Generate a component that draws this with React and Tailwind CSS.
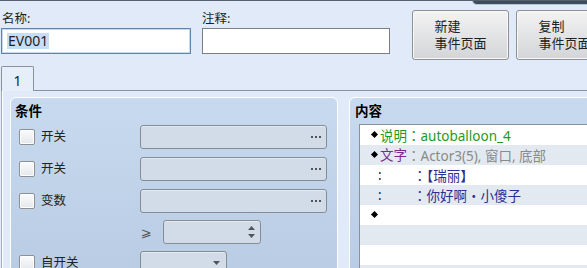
import React from "react";

const font = "font-['Noto_Sans','Noto_Sans_CJK_SC',sans-serif]";
const colon = "font-['Noto_Sans_CJK_TC',sans-serif]";

function Check() {
  return (
    <span className="block w-[16px] h-[16px] shrink-0 rounded-[2px] border border-[#8e9094] bg-linear-to-b from-[#fbfbfb] to-[#e4e8ec] shadow-[inset_0_0_0_1px_#fff]" />
  );
}

function Dots() {
  return (
    <span className="flex gap-[2px]">
      <span className="w-[2px] h-[2px] bg-[#4f5459]" />
      <span className="w-[2px] h-[2px] bg-[#4f5459]" />
      <span className="w-[2px] h-[2px] bg-[#4f5459]" />
    </span>
  );
}

function Field({ className = "", children }) {
  return (
    <div
      className={`h-[24px] shrink-0 rounded-[3px] border border-[#868c94] bg-[#d1dce8] shadow-[inset_0_1px_0_#e3eaf2] flex items-center justify-end ${className}`}
    >
      {children}
    </div>
  );
}

function CondRow({ label, className = "" }) {
  return (
    <div className={`flex items-center h-[24px] ${className}`}>
      <div className="w-[129px] shrink-0 flex items-center pl-[8px]">
        <Check />
        <span className="ml-[6px] text-[12.5px] text-[#222]">{label}</span>
      </div>
      <Field className="w-[187px] pr-[5px]">
        <Dots />
      </Field>
    </div>
  );
}

function Diamond() {
  return <span className="inline-block w-[5px] h-[5px] bg-black rotate-45 mr-[3px] mb-[2px]" />;
}

export default function App() {
  return (
    <div
      className={`relative w-[587px] h-[268px] overflow-hidden bg-[#e0eaf8] border-t border-[#56616e] text-[#1e1e1e] ${font}`}
    >
      {/* window title bar edge, top right */}
      <div className="absolute top-[-1px] left-[472px] w-[140px] h-[5px] bg-[#3c4b5e] rounded-bl-[7px] border-l border-b border-[#b8c5d3]" />

      {/* name / note / buttons */}
      <div className="flex items-start h-[65px] pt-[8px]">
        <div className="ml-[1px] w-[190px] shrink-0">
          <div className="h-[19px] leading-[19px] text-[12.5px] pl-[1px]">名称:</div>
          <div className="h-[26px] border border-[#5f84ad] bg-white shadow-[inset_0_0_0_1px_#c9d9ea] flex items-center pl-[5px]">
            <span className="bg-[#c5ddf5] text-[14px] leading-[16px] px-[1px]">EV001</span>
          </div>
        </div>
        <div className="ml-[11px] w-[188px] shrink-0">
          <div className="h-[19px] leading-[19px] text-[12.5px]">注释:</div>
          <div className="h-[26px] border border-[#7b7f85] bg-white" />
        </div>
        <button className="ml-[22px] mt-[1px] w-[97px] h-[50px] shrink-0 rounded-[3px] border border-[#8d9094] bg-linear-to-b from-[#f3f3f3] to-[#d3d5d8] shadow-[inset_0_0_0_1px_#f8f8f8] flex items-center justify-center">
          <span className="text-left text-[13px] leading-[17px] text-[#222]">
            新建
            <br />
            事件页面
          </span>
        </button>
        <button className="ml-[7px] mt-[1px] w-[97px] h-[50px] shrink-0 rounded-[3px] border border-[#8d9094] bg-linear-to-b from-[#f3f3f3] to-[#d3d5d8] shadow-[inset_0_0_0_1px_#f8f8f8] flex items-center justify-center">
          <span className="text-left text-[13px] leading-[17px] text-[#222]">
            复制
            <br />
            事件页面
          </span>
        </button>
      </div>

      {/* tab strip */}
      <div className="flex h-[25px]">
        <div className="ml-[1px] w-[33px] h-[25px] shrink-0 border border-b-0 border-[#8a929b] rounded-t-[2px] bg-[#e6eefa] flex items-center justify-center text-[14px] pt-[2px]">
          1
        </div>
        <div className="flex-1 border-b border-[#8a929b]" />
      </div>

      {/* tab page */}
      <div className="ml-[1px] h-[200px] border-l border-[#a4b0bc] shadow-[inset_1px_0_0_#fff] flex pl-[8px] pt-[6px]">
        {/* conditions */}
        <div className="w-[328px] h-[190px] shrink-0 rounded-t-[6px] border border-white bg-linear-to-b from-[#c8daef] to-[#b7cbe3]">
          <div className="h-[27px] pt-[4px] pl-[4px] text-[13.5px] leading-[18px] font-bold text-black">条件</div>
          <CondRow label="开关" />
          <CondRow label="开关" className="mt-[8px]" />
          <CondRow label="变数" className="mt-[8px]" />
          <div className="flex items-center h-[24px] mt-[7px]">
            <div className="w-[129px] shrink-0" />
            <span className="w-[23px] shrink-0 text-[13px] text-[#555] font-['DejaVu_Sans',sans-serif] leading-none pl-[1px]">⩾</span>
            <Field className="w-[98px] pr-[5px]">
              <span className="flex flex-col items-center gap-[4px]">
                <svg width="7" height="4" viewBox="0 0 7 4">
                  <path d="M0 4 L3.5 0 L7 4 Z" fill="#4f555b" />
                </svg>
                <svg width="7" height="4" viewBox="0 0 7 4">
                  <path d="M0 0 L7 0 L3.5 4 Z" fill="#4f555b" />
                </svg>
              </span>
            </Field>
          </div>
          <div className="flex items-center h-[24px] mt-[7px]">
            <div className="w-[129px] shrink-0 flex items-center pl-[8px]">
              <Check />
              <span className="ml-[6px] text-[12.5px] text-[#222]">自开关</span>
            </div>
            <Field className="w-[87px] pr-[6px]">
              <svg width="7" height="4" viewBox="0 0 7 4">
                <path d="M0 0 L7 0 L3.5 4 Z" fill="#4f555b" />
              </svg>
            </Field>
          </div>
        </div>

        {/* contents */}
        <div className="ml-[11px] w-[260px] h-[190px] shrink-0 rounded-t-[6px] border border-white bg-linear-to-b from-[#c8daef] to-[#b7cbe3]">
          <div className="h-[26px] pt-[4px] pl-[5px] text-[13.5px] leading-[18px] font-bold text-black">内容</div>
          <div className="ml-[9px] h-[160px] border-l border-t border-[#8a9199] bg-white text-[13.5px] leading-[20px] whitespace-nowrap">
            <div className="h-[20px] flex items-center pl-[12px] bg-white">
              <Diamond />
              <span className="text-[#1f9a1f]">
                说明<span className={colon}>：</span>autoballoon_4
              </span>
            </div>
            <div className="h-[20px] flex items-center pl-[12px] bg-[#e3e9f0]">
              <Diamond />
              <span className="text-[#7e2a8c]">文字</span>
              <span className="text-[#8a8a8a]">
                <span className={colon}>：</span>Actor3(5), 窗口, 底部
              </span>
            </div>
            <div className="h-[20px] flex items-center pl-[18px] bg-white">
              <span className="w-[35px] text-[#222]">:</span>
              <span className="text-[#2a2f96]">
                <span className={colon}>：</span>【瑞丽】
              </span>
            </div>
            <div className="h-[20px] flex items-center pl-[18px] bg-[#e3e9f0]">
              <span className="w-[35px] text-[#222]">:</span>
              <span className="text-[#2a2f96]">
                <span className={colon}>：</span>你好啊・小傻子
              </span>
            </div>
            <div className="h-[20px] flex items-center pl-[12px] bg-white">
              <Diamond />
            </div>
            <div className="h-[20px] bg-[#e3e9f0]" />
            <div className="h-[20px] bg-white" />
            <div className="h-[20px] bg-[#e3e9f0]" />
          </div>
        </div>
      </div>
    </div>
  );
}
